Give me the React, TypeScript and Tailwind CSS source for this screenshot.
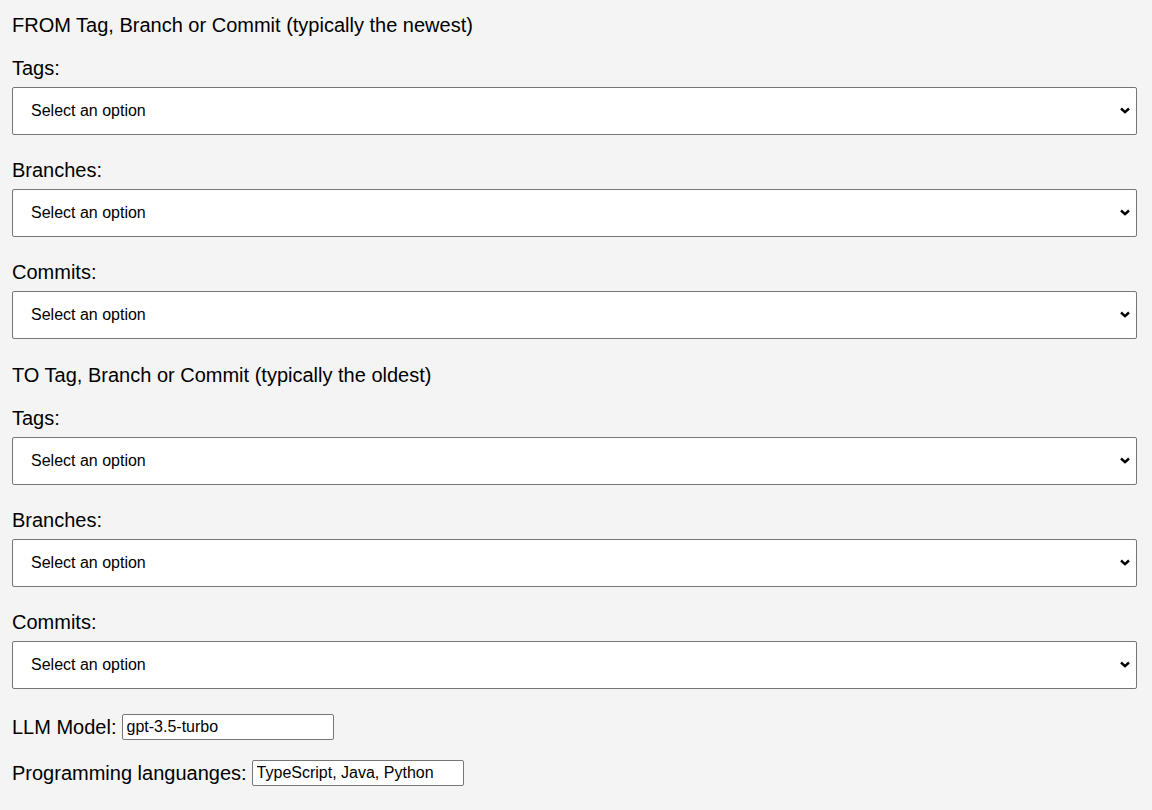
const Field = ({ label, first }: { label: string; first?: boolean }) => (
  <div className={first ? "mt-5" : "mt-6"}>
    <label className="block text-[20px] leading-[23px]">{label}</label>
    <div className="relative mt-[7px] w-[1125px]">
      <select className="block h-[48px] w-full appearance-none rounded-[2px] border border-[#767676] bg-white pl-[18px] text-[16px] text-black">
        <option>Select an option</option>
      </select>
      <svg
        className="pointer-events-none absolute right-[7px] top-[20px]"
        width="10"
        height="7"
        viewBox="0 0 10 7"
        fill="none"
        stroke="black"
        strokeWidth="2.4"
      >
        <path d="M1 1.5 L5 5.2 L9 1.5" />
      </svg>
    </div>
  </div>
);

export default function App() {
  return (
    <div className="min-h-[810px] bg-[#f4f4f4] px-3 pt-[14px] text-black" style={{ fontFamily: '"Liberation Sans", Arial, sans-serif' }}>
      <h2 className="text-[20px] leading-[23px]">FROM Tag, Branch or Commit (typically the newest)</h2>
      <Field label="Tags:" first />
      <Field label="Branches:" />
      <Field label="Commits:" />

      <h2 className="mt-[25px] text-[20px] leading-[23px]">TO Tag, Branch or Commit (typically the oldest)</h2>
      <Field label="Tags:" first />
      <Field label="Branches:" />
      <Field label="Commits:" />

      <div className="mt-[25px] flex items-center gap-[5px] text-[20px]">
        <span className="leading-[23px]">LLM Model:</span>
        <input
          className="h-[26px] w-[212px] rounded-[2px] border border-[#767676] bg-white px-[4px] text-[16px]"
          defaultValue="gpt-3.5-turbo"
        />
      </div>
      <div className="mt-5 flex items-center gap-[5px] text-[20px]">
        <span className="leading-[23px]">Programming languanges:</span>
        <input
          className="h-[26px] w-[212px] rounded-[2px] border border-[#767676] bg-white px-[4px] text-[16px]"
          defaultValue="TypeScript, Java, Python"
        />
      </div>
    </div>
  );
}
